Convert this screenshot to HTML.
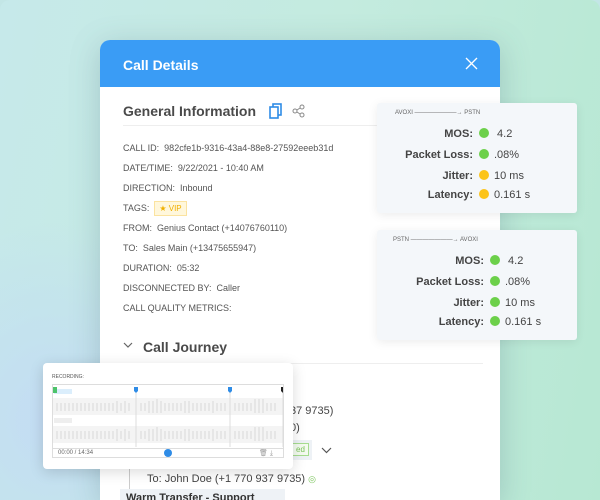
<!DOCTYPE html>
<html style="overflow:hidden;height:500px"><head><style>
*{margin:0;padding:0;box-sizing:border-box}
body{width:600px;height:500px;overflow:hidden;position:relative;font-family:"Liberation Sans",sans-serif;background:#c3e6e6}
.bg{position:absolute;left:0;top:0;width:600px;height:500px;border-radius:10px 10px 0 0;background:linear-gradient(100deg,#c6e9ea 0%,#c4ebdf 50%,#b7e8d3 100%);overflow:hidden}
.bg:after{content:"";position:absolute;left:-120px;top:220px;width:340px;height:400px;background:radial-gradient(#c3dcf4,transparent 70%)}
.abs{position:absolute}
.modal{left:100px;top:40px;width:400px;height:460px;background:#fff;border-radius:10px 10px 0 0;box-shadow:0 6px 30px rgba(60,90,110,.25);overflow:hidden}
.hd{height:47px;background:#3a9cf5;color:#fff;font-weight:bold;font-size:14px;padding:17px 0 0 23px}
.row{position:absolute;left:23px;font-size:9px;color:#555}
.card{background:#f4f7fa;border-radius:3px;box-shadow:0 2px 10px rgba(0,0,0,.08);width:200px}
.m{position:absolute;font-size:11px;color:#444;white-space:nowrap}
.m b{display:inline-block;text-align:right}
.dot{display:inline-block;width:10px;height:10px;border-radius:50%;vertical-align:-1px;margin:0 5px 0 6px}
.g{background:#6cd04a}.y{background:#fcc419}
</style></head><body>
<div class="bg"></div>
<div class="abs modal">
 <div class="hd">Call Details<svg class="abs" style="right:22px;top:17px" width="13" height="13"><path d="M1 1L12 12M12 1L1 12" stroke="#fff" stroke-width="1.3"/></svg></div>
 <div class="abs" style="left:23px;top:63px;font-size:14px;font-weight:bold;color:#4a4a4a">General Information</div>
 <svg class="abs" style="left:169px;top:63px" width="14" height="16"><rect x="4" y="1" width="8" height="11" fill="none" stroke="#2f8ce6" stroke-width="1.6"/><rect x="1" y="4" width="8" height="11" fill="#fff" stroke="#2f8ce6" stroke-width="1.6"/></svg>
 <svg class="abs" style="left:192px;top:64px" width="13" height="14" fill="none" stroke="#888"><circle cx="10" cy="3" r="2"/><circle cx="3" cy="7" r="2"/><circle cx="10" cy="11" r="2"/><path d="M5 6l3-2M5 8l3 2"/></svg>
 <div class="abs" style="left:23px;top:85px;width:360px;border-top:1px solid #eee"></div>
 <div class="row" style="top:103px">CALL ID:&nbsp; 982cfe1b-9316-43a4-88e8-27592eeeb31d</div>
 <div class="row" style="top:123px">DATE/TIME:&nbsp; 9/22/2021 - 10:40 AM</div>
 <div class="row" style="top:143px">DIRECTION:&nbsp; Inbound</div>
 <div class="row" style="top:161px">TAGS:&nbsp; <span style="display:inline-block;background:#fff7dc;border:1px solid #fbe3a0;color:#f0b000;padding:2px 4px;font-size:8px">★ VIP</span></div>
 <div class="row" style="top:183px">FROM:&nbsp; Genius Contact (+14076760110)</div>
 <div class="row" style="top:203px">TO:&nbsp; Sales Main (+13475655947)</div>
 <div class="row" style="top:223px">DURATION:&nbsp; 05:32</div>
 <div class="row" style="top:243px">DISCONNECTED BY:&nbsp; Caller</div>
 <div class="row" style="top:263px">CALL QUALITY METRICS:</div>
 <svg class="abs" style="left:23px;top:302px" width="10" height="7"><path d="M1 1l4 4 4-4" fill="none" stroke="#666" stroke-width="1.2"/></svg>
 <div class="abs" style="left:43px;top:299px;font-size:14px;font-weight:bold;color:#4a4a4a">Call Journey</div>
 <div class="abs" style="left:23px;top:323px;width:360px;border-top:1px solid #eee"></div>
 <div class="abs" style="left:190px;top:365px;font-size:11px;color:#444">37 9735)</div>
 <div class="abs" style="left:190px;top:382px;font-size:11px;color:#444">0)</div>
 <div class="abs" style="left:190px;top:400px;width:22px;height:20px;background:#eef2f6"></div>
 <div class="abs" style="left:192px;top:403px;border:1px solid #a6dd90;color:#7bc45c;font-size:8px;padding:1px 3px;background:#f4fbf0">ed</div>
 <svg class="abs" style="left:221px;top:407px" width="11" height="7"><path d="M1 1l4.5 4.5L10 1" fill="none" stroke="#555" stroke-width="1.2"/></svg>
 <div class="abs" style="left:29px;top:420px;height:40px;border-left:1px solid #ccc"></div>
 <div class="abs" style="left:47px;top:423px;font-size:7px;color:#aaa">10:40:50 AM EST</div>
 <div class="abs" style="left:47px;top:433px;font-size:11px;color:#444">To: John Doe (+1 770 937 9735) <span style="color:#7bc45c;font-size:9px">◎</span></div>
 <div class="abs" style="left:20px;top:449px;width:165px;height:20px;background:#eef2f6;font-size:11px;font-weight:bold;color:#333;padding:3px 0 0 6px">Warm Transfer - Support</div>
</div>
<div class="abs card" style="left:377px;top:103px;height:110px">
 <div class="abs" style="left:18px;top:7px;font-size:6px;color:#666">AVOXI ———————→ PSTN</div>
 <div class="m" style="left:0;top:25px"><b style="width:96px">MOS:</b><span class="dot g"></span> 4.2</div>
 <div class="m" style="left:0;top:46px"><b style="width:96px">Packet Loss:</b><span class="dot g"></span>.08%</div>
 <div class="m" style="left:0;top:67px"><b style="width:96px">Jitter:</b><span class="dot y"></span>10 ms</div>
 <div class="m" style="left:0;top:86px"><b style="width:96px">Latency:</b><span class="dot y"></span>0.161 s</div>
</div>
<div class="abs card" style="left:377px;top:230px;height:110px">
 <div class="abs" style="left:16px;top:7px;font-size:6px;color:#666">PSTN ———————→ AVOXI</div>
 <div class="m" style="left:0;top:25px"><b style="width:107px">MOS:</b><span class="dot g"></span> 4.2</div>
 <div class="m" style="left:0;top:46px"><b style="width:107px">Packet Loss:</b><span class="dot g"></span>.08%</div>
 <div class="m" style="left:0;top:67px"><b style="width:107px">Jitter:</b><span class="dot g"></span>10 ms</div>
 <div class="m" style="left:0;top:86px"><b style="width:107px">Latency:</b><span class="dot g"></span>0.161 s</div>
</div>
<div class="abs" style="left:43px;top:363px;width:250px;height:106px;background:#fff;border-radius:4px;box-shadow:0 3px 14px rgba(0,0,0,.15)">
 <div class="abs" style="left:9px;top:11px;font-size:5px;color:#555">RECORDING:</div>
 <div class="abs" style="left:9px;top:21px;width:232px;height:74px;border:1px solid #ddd"></div>
 <svg class="abs" style="left:10px;top:22px" width="230" height="62">
  <rect x="0" y="13" width="230" height="17" fill="#f4f4f4"/><rect x="0" y="41" width="230" height="17" fill="#f4f4f4"/>
  <rect x="1" y="4" width="18" height="5" fill="#dbeefc"/><rect x="1" y="33" width="18" height="5" fill="#eee"/>
  <rect x="0" y="2" width="4" height="6" fill="#4cc36a"/>
  <path d="M81 2h4v4l-2 2-2-2z" fill="#2f8ce6"/><path d="M175 2h4v4l-2 2-2-2z" fill="#2f8ce6"/><path d="M228 2h4v4l-2 2-2-2z" fill="#222"/>
  <path d="M83 8v54M177 8v54M230 8v54" stroke="#ddd"/>
  <g stroke="#ccc" stroke-width=".7">
   <path d="M4 18v8M8 18v8M12 18v8M16 18v8M20 18v8M24 18v8M28 18v8M32 18v8M36 18v8M40 18v8M44 18v8M48 18v8M52 18v8M56 18v8M60 18v8M64 16v12M68 18v8M72 16v12M76 18v8M88 18v8M92 18v8M96 16v12M100 16v12M104 14v14M108 16v12M112 18v8M116 18v8M120 18v8M124 18v8M128 18v8M132 16v12M136 16v12M140 18v8M144 18v8M148 18v8M152 18v8M156 18v8M160 16v12M164 18v8M168 18v8M172 18v8M182 18v8M186 18v8M190 18v8M194 18v8M198 18v8M202 14v14M206 14v14M210 14v14M214 18v8M218 18v8M222 18v8"/>
   <path transform="translate(0,28)" d="M4 18v8M8 18v8M12 18v8M16 18v8M20 18v8M24 18v8M28 18v8M32 18v8M36 18v8M40 18v8M44 18v8M48 18v8M52 18v8M56 18v8M60 18v8M64 16v12M68 18v8M72 16v12M76 18v8M88 18v8M92 18v8M96 16v12M100 16v12M104 14v14M108 16v12M112 18v8M116 18v8M120 18v8M124 18v8M128 18v8M132 16v12M136 16v12M140 18v8M144 18v8M148 18v8M152 18v8M156 18v8M160 16v12M164 18v8M168 18v8M172 18v8M182 18v8M186 18v8M190 18v8M194 18v8M198 18v8M202 14v14M206 14v14M210 14v14M214 18v8M218 18v8M222 18v8"/>
  </g>
 </svg>
 <div class="abs" style="left:10px;top:85px;width:230px;border-top:1px solid #ddd"></div>
 <div class="abs" style="left:15px;top:87px;font-size:6px;color:#666">00:00 / 14:34</div>
 <div class="abs" style="left:121px;top:86px;width:8px;height:8px;border-radius:50%;background:#2f8ce6"></div>
 <div class="abs" style="left:216px;top:86px;font-size:7px;color:#999">🗑 ⤓</div>
</div>
</body></html>
